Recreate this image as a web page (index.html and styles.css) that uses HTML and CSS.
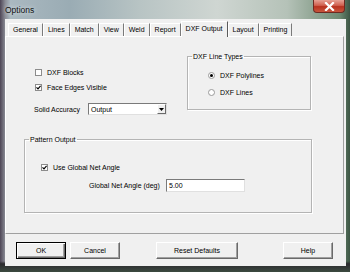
FILE: index.html
```html
<!DOCTYPE html>
<html lang="en">
<head>
    <meta charset="UTF-8">
    <title>Options</title>
    <link rel="stylesheet" href="styles.css">
</head>
<body>

    <div class="window">
        <div class="titlebar">
            <span class="title">Options</span>
            <span class="close">
                <svg width="11" height="9" viewBox="0 0 11 9"><path d="M2 1 L9 8 M9 1 L2 8" stroke="#fff" stroke-width="2.2" stroke-linecap="square"/></svg>
            </span>
        </div>

        <div class="client">
            <div class="tabs">
                <span class="tab">General</span>
                <span class="tab">Lines</span>
                <span class="tab">Match</span>
                <span class="tab">View</span>
                <span class="tab">Weld</span>
                <span class="tab">Report</span>
                <span class="tab tab-active">DXF Output</span>
                <span class="tab">Layout</span>
                <span class="tab">Printing</span>
            </div>

            <div class="page">
                <div class="top-row">
                    <div class="left-col">
                        <label class="check-row first">
                            <span class="checkbox"></span>
                            DXF Blocks
                        </label>
                        <label class="check-row">
                            <span class="checkbox">
                                <svg width="5" height="5" viewBox="0 0 5 5"><path d="M0.5 2.3 L2 3.8 L4.6 0.8" stroke="#000" stroke-width="1.2" fill="none"/></svg>
                            </span>
                            Face Edges Visible
                        </label>
                        <div class="field-row">
                            <span class="field-label">Solid Accuracy</span>
                            <span class="select">
                                <span class="select-text">Output</span>
                                <span class="select-btn">
                                    <svg width="5" height="3" viewBox="0 0 5 3"><path d="M0 0 H5 L2.5 3 Z" fill="#000"/></svg>
                                </span>
                            </span>
                        </div>
                    </div>

                    <fieldset class="group group-lines">
                        <legend>DXF Line Types</legend>
                        <div class="group-body">
                            <label class="radio-row">
                                <span class="radio radio-on"></span>
                                DXF Polylines
                            </label>
                            <label class="radio-row">
                                <span class="radio"></span>
                                DXF Lines
                            </label>
                        </div>
                    </fieldset>
                </div>

                <fieldset class="group group-pattern">
                    <legend>Pattern Output</legend>
                    <div class="group-body">
                        <label class="check-row">
                            <span class="checkbox">
                                <svg width="5" height="5" viewBox="0 0 5 5"><path d="M0.5 2.3 L2 3.8 L4.6 0.8" stroke="#000" stroke-width="1.2" fill="none"/></svg>
                            </span>
                            Use Global Net Angle
                        </label>
                        <div class="angle-row">
                            <span class="angle-label">Global Net Angle (deg)</span>
                            <span class="textbox">5.00</span>
                        </div>
                    </div>
                </fieldset>
            </div>

            <div class="buttons">
                <button class="button button-default">OK</button>
                <button class="button btn-cancel">Cancel</button>
                <button class="button btn-reset">Reset Defaults</button>
                <button class="button btn-help">Help</button>
            </div>
        </div>
    </div>

</body>
</html>
```

FILE: styles.css
```css
body {
    margin: 0;
    font-family: "Liberation Sans", Arial, sans-serif;
    font-size: 7px;
    color: #000;
}
.window {
    width: 350px;
    height: 272px;
    box-sizing: border-box;
    padding: 0 4px 6px 5px;
    display: flex;
    flex-direction: column;
    background:
        linear-gradient(180deg, rgba(0,0,0,0) 0%, rgba(0,0,0,0) 96%, #2b2a2e 97%, #3c4a40 100%),
        linear-gradient(90deg, #4e4656 0%, #8b8d96 1.5%, #aab8c0 3%, #9aacb4 20%, #b8c4c4 40%, #cfd6d2 62%, #b5c2b8 82%, #6e8a72 97%, #3c5544 100%);
}
.titlebar {
    height: 19px;
    display: flex;
    justify-content: space-between;
    align-items: flex-start;
}
.title {
    font-size: 8.5px;
    padding-top: 5px;
    color: #111;
    text-shadow: 0 0 4px #e8eef0;
}
.close {
    width: 32px;
    height: 13px;
    margin-right: 1px;
    border: 1px solid #6e2a22;
    border-top: none;
    border-radius: 0 0 4px 4px;
    box-sizing: border-box;
    background: linear-gradient(180deg, #e6a195 0%, #d0604f 45%, #b8321f 55%, #c9563e 100%);
    display: flex;
    align-items: center;
    justify-content: center;
}
.client {
    flex: 1;
    background: #f0f0f0;
    display: flex;
    flex-direction: column;
}
.tabs {
    height: 17px;
    display: flex;
    align-items: flex-end;
    padding-left: 3px;
}
.tab {
    height: 13px;
    line-height: 12px;
    padding: 0 4px;
    box-sizing: border-box;
    border-top: 1px solid #fff;
    border-left: 1px solid #fff;
    border-right: 1px solid #7a7a7a;
    white-space: nowrap;
}
.tab-active {
    height: 16px;
    line-height: 14px;
    margin-bottom: -1px;
    position: relative;
    background: #f0f0f0;
    border-right-color: #5a5a5a;
}
.page {
    height: 198px;
    box-sizing: border-box;
    margin-right: 2px;
    border: 1px solid #a0a0a0;
    border-top-color: #fff;
    border-left-color: #fff;
    padding: 15px 0 0 18px;
}
.top-row {
    display: flex;
    align-items: flex-start;
}
.left-col {
    width: 163px;
    padding-left: 10px;
    box-sizing: border-box;
}
.check-row {
    height: 15px;
    display: flex;
    align-items: center;
    gap: 5px;
    margin-left: 1px;
}
.check-row.first {
    margin-top: 13px;
}
.checkbox {
    width: 7px;
    height: 7px;
    box-sizing: border-box;
    border: 1px solid #8c8c8c;
    background: #fff;
    display: flex;
    align-items: center;
    justify-content: center;
}
.field-row {
    height: 14px;
    margin-top: 7px;
    display: flex;
    align-items: center;
}
.field-label {
    width: 54px;
}
.select {
    width: 79px;
    height: 12px;
    box-sizing: border-box;
    border: 1px solid #7a7a7a;
    border-right-color: #e0e0e0;
    border-bottom-color: #e0e0e0;
    background: #fff;
    display: flex;
    align-items: center;
    justify-content: space-between;
    padding-left: 2px;
}
.select-btn {
    width: 9px;
    height: 10px;
    box-sizing: border-box;
    border: 1px solid #fff;
    border-right-color: #6a6a6a;
    border-bottom-color: #6a6a6a;
    background: #f0f0f0;
    display: flex;
    align-items: center;
    justify-content: center;
}
.group {
    margin: 0;
    padding: 0;
    border: 1px solid #b4b4b4;
    box-shadow: 1px 1px 0 #fff, inset 1px 1px 0 #fff;
}
.group legend {
    margin-left: 4px;
    padding: 0 1px;
    line-height: 9px;
}
.group-lines {
    width: 124px;
    box-sizing: border-box;
}
.group-lines .group-body {
    padding: 6px 0 8px 20px;
}
.radio-row {
    height: 17px;
    display: flex;
    align-items: center;
    gap: 5px;
}
.radio {
    width: 7px;
    height: 7px;
    box-sizing: border-box;
    border-radius: 50%;
    border: 1px solid #9a9a9a;
    background: #fff;
    display: flex;
    align-items: center;
    justify-content: center;
}
.radio-on::after {
    content: "";
    width: 3px;
    height: 3px;
    border-radius: 50%;
    background: #000;
}
.group-pattern {
    width: 288px;
    box-sizing: border-box;
    margin-top: 19px;
}
.group-pattern .group-body {
    padding: 16px 0 20px 15px;
}
.angle-row {
    height: 13px;
    margin-top: 4px;
    display: flex;
    align-items: center;
}
.angle-label {
    width: 77px;
    margin-left: 49px;
}
.textbox {
    width: 79px;
    height: 13px;
    box-sizing: border-box;
    border: 1px solid #7a7a7a;
    border-right-color: #e0e0e0;
    border-bottom-color: #e0e0e0;
    background: #fff;
    padding-left: 2px;
    line-height: 11px;
}
.buttons {
    display: flex;
    padding: 8px 0 0 11px;
}
.button {
    height: 17px;
    width: 50px;
    box-sizing: border-box;
    margin: 0;
    padding: 0;
    font-family: inherit;
    font-size: 7px;
    color: #000;
    background: #f0f0f0;
    border: 1px solid #fff;
    border-right-color: #6a6a6a;
    border-bottom-color: #6a6a6a;
    box-shadow: inset -1px -1px 0 #a0a0a0;
}
.button-default {
    border: 1px solid #000;
    box-shadow: inset 1px 1px 0 #fff, inset -1px -1px 0 #6a6a6a, inset -2px -2px 0 #a0a0a0;
}
.btn-cancel {
    margin-left: 4px;
}
.btn-reset {
    width: 82px;
    margin-left: 36px;
}
.btn-help {
    margin-left: 45px;
}
```
